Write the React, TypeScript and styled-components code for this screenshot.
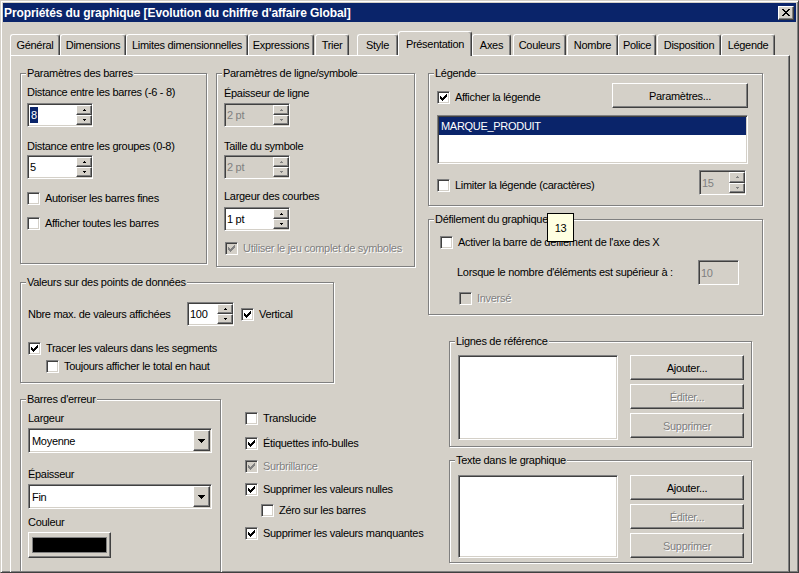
import React from 'react';
import styled, { createGlobalStyle, css } from 'styled-components';

const FACE = '#d4d0c8';
const SHADOW = '#808080';
const DARK = '#404040';
const NAVY = '#0a246a';

const GlobalStyle = createGlobalStyle`
  html, body {
    margin: 0;
    padding: 0;
    background: ${FACE};
  }
  body {
    font-family: 'Liberation Sans', Arial, sans-serif;
    font-size: 11px;
    letter-spacing: -0.3px;
    color: #000;
  }
  * {
    box-sizing: border-box;
  }
`;

const raised = css`
  border: 1px solid;
  border-color: #fff ${DARK} ${DARK} #fff;
  box-shadow: inset -1px -1px ${SHADOW}, inset 1px 1px ${FACE};
  background: ${FACE};
`;

const sunken = css`
  border: 1px solid;
  border-color: ${SHADOW} #fff #fff ${SHADOW};
  box-shadow: inset 1px 1px ${DARK}, inset -1px -1px ${FACE};
`;

const disabledText = css`
  color: ${SHADOW};
  text-shadow: 1px 1px 0 #fff;
`;

// Dialog frame
const Window = styled.div`
  width: 799px;
  height: 573px;
  overflow: hidden;
  background: ${FACE};
  border: 1px solid;
  border-color: ${FACE} ${DARK} ${DARK} ${FACE};
  box-shadow: inset 1px 1px #fff, inset -1px -1px ${SHADOW};
  padding: 2px;
  display: flex;
  flex-direction: column;
`;

const TitleBar = styled.div`
  height: 19px;
  flex: none;
  background: ${NAVY};
  display: flex;
  align-items: center;
  justify-content: space-between;
  padding: 0 2px 0 1px;
`;

const TitleText = styled.div`
  color: #fff;
  font-weight: bold;
  font-size: 12px;
  letter-spacing: -0.1px;
  white-space: nowrap;
`;

const CloseButton = styled.div`
  ${raised};
  width: 16px;
  height: 14px;
  display: flex;
  align-items: center;
  justify-content: center;
`;

// Tabs
const TabRow = styled.div`
  display: flex;
  align-items: flex-end;
  height: 24px;
  margin-top: 9px;
  padding-left: 7px;
  flex: none;
`;

const Tab = styled.div<{ $w: number; $gap: number; $active?: boolean }>`
  width: ${(p) => p.$w}px;
  margin-left: ${(p) => p.$gap}px;
  height: ${(p) => (p.$active ? 25 : 21)}px;
  margin-bottom: ${(p) => (p.$active ? -1 : 0)}px;
  position: ${(p) => (p.$active ? 'relative' : 'static')};
  z-index: ${(p) => (p.$active ? 2 : 'auto')};
  background: ${FACE};
  border-top: 1px solid #fff;
  border-left: 1px solid #fff;
  border-right: 1px solid ${DARK};
  box-shadow: inset -1px 0 ${SHADOW};
  border-radius: 3px 3px 0 0;
  display: flex;
  align-items: center;
  justify-content: center;
  padding-bottom: ${(p) => (p.$active ? 1 : 0)}px;
  white-space: nowrap;
  flex: none;
`;

const Panel = styled.div`
  margin-left: 7px;
  width: 780px;
  flex: 1;
  border-top: 1px solid #fff;
  border-left: 1px solid #fff;
  border-right: 1px solid ${DARK};
  box-shadow: inset -1px 0 ${SHADOW};
  padding: 17px 0 0 9px;
  display: flex;
  gap: 13px;
  align-items: flex-start;
`;

const Column = styled.div<{ $w: number }>`
  width: ${(p) => p.$w}px;
  display: flex;
  flex-direction: column;
  align-items: flex-start;
  flex: none;
`;

const GroupRow = styled.div<{ $mt?: number }>`
  display: flex;
  align-items: flex-start;
  gap: 9px;
  margin-top: ${(p) => p.$mt ?? 0}px;
`;

// Etched group box
const Group = styled.div<{ $w: number; $h: number; $pad: string; $mt?: number; $ml?: number }>`
  position: relative;
  width: ${(p) => p.$w}px;
  height: ${(p) => p.$h}px;
  margin-top: ${(p) => p.$mt ?? 0}px;
  margin-left: ${(p) => p.$ml ?? 0}px;
  padding: ${(p) => p.$pad};
  border: 1px solid ${SHADOW};
  box-shadow: inset 1px 1px #fff, 1px 1px #fff;
  display: flex;
  flex-direction: column;
  align-items: flex-start;
  flex: none;
`;

const GroupTitle = styled.span`
  position: absolute;
  top: -7px;
  left: 5px;
  padding: 0 1px;
  line-height: 13px;
  background: ${FACE};
  white-space: nowrap;
`;

const Label = styled.div<{ $mt?: number; $w?: number; $disabled?: boolean }>`
  line-height: 13px;
  height: 13px;
  margin-top: ${(p) => p.$mt ?? 0}px;
  white-space: nowrap;
  ${(p) => (p.$w ? `width: ${p.$w}px; flex: none;` : '')}
  ${(p) => (p.$disabled ? disabledText : '')}
`;

const Row = styled.div<{ $mt?: number; $ml?: number; $align?: string; $justify?: string }>`
  display: flex;
  align-items: ${(p) => p.$align ?? 'center'};
  justify-content: ${(p) => p.$justify ?? 'flex-start'};
  margin-top: ${(p) => p.$mt ?? 0}px;
  margin-left: ${(p) => p.$ml ?? 0}px;
  align-self: stretch;
`;

// Spin edit
const SpinField = styled.div<{ $w: number; $h?: number; $disabled?: boolean; $mt?: number; $mr?: number }>`
  ${sunken};
  width: ${(p) => p.$w}px;
  height: ${(p) => p.$h ?? 24}px;
  margin-top: ${(p) => p.$mt ?? 0}px;
  margin-right: ${(p) => p.$mr ?? 0}px;
  background: ${(p) => (p.$disabled ? FACE : '#fff')};
  padding: 1px;
  display: flex;
  align-items: stretch;
  flex: none;
`;

const SpinValue = styled.div<{ $disabled?: boolean }>`
  flex: 1;
  display: flex;
  align-items: center;
  padding-left: 1px;
  ${(p) => (p.$disabled ? `color: ${SHADOW};` : '')}
`;

const Selection = styled.span`
  background: ${NAVY};
  color: #fff;
  line-height: 16px;
  padding: 0 1px;
`;

const SpinButtons = styled.div`
  width: 16px;
  margin-right: -1px;
  display: flex;
  flex-direction: column;
`;

const SpinButton = styled.div`
  ${raised};
  flex: 1;
  display: flex;
  align-items: center;
  justify-content: center;
`;

// Combo box
const Combo = styled.div<{ $w: number; $mt?: number }>`
  ${sunken};
  width: ${(p) => p.$w}px;
  height: 25px;
  margin-top: ${(p) => p.$mt ?? 0}px;
  background: #fff;
  padding: 1px;
  display: flex;
  align-items: stretch;
  flex: none;
`;

const ComboValue = styled.div`
  flex: 1;
  display: flex;
  align-items: center;
  padding-left: 2px;
`;

const ComboButton = styled.div`
  ${raised};
  width: 17px;
  display: flex;
  align-items: center;
  justify-content: center;
`;

// Check box
const CheckRow = styled.div<{ $mt?: number; $ml?: number }>`
  display: flex;
  align-items: center;
  gap: 5px;
  margin-top: ${(p) => p.$mt ?? 0}px;
  margin-left: ${(p) => p.$ml ?? 0}px;
  line-height: 13px;
  white-space: nowrap;
  flex: none;
`;

const Box = styled.span<{ $disabled?: boolean }>`
  ${sunken};
  width: 13px;
  height: 13px;
  background: ${(p) => (p.$disabled ? FACE : '#fff')};
  display: flex;
  align-items: center;
  justify-content: center;
  flex: none;
`;

const CheckText = styled.span<{ $disabled?: boolean }>`
  ${(p) => (p.$disabled ? disabledText : '')}
`;

// Push button
const Button = styled.div<{ $w: number; $h?: number; $disabled?: boolean }>`
  ${raised};
  width: ${(p) => p.$w}px;
  height: ${(p) => p.$h ?? 25}px;
  display: flex;
  align-items: center;
  justify-content: center;
  white-space: nowrap;
  flex: none;
  ${(p) => (p.$disabled ? disabledText : '')}
`;

const ButtonStack = styled.div`
  display: flex;
  flex-direction: column;
  gap: 4px;
  margin-left: 12px;
`;

const ColorButton = styled.div<{ $mt?: number }>`
  ${raised};
  width: 83px;
  height: 26px;
  margin-top: ${(p) => p.$mt ?? 0}px;
  padding: 4px 3px;
  display: flex;
  flex: none;
`;

const Swatch = styled.div<{ $color: string }>`
  flex: 1;
  background: ${(p) => p.$color};
  border: 1px solid ${SHADOW};
`;

// List box
const ListBox = styled.div<{ $w: number; $h: number; $mt?: number }>`
  ${sunken};
  width: ${(p) => p.$w}px;
  height: ${(p) => p.$h}px;
  margin-top: ${(p) => p.$mt ?? 0}px;
  background: #fff;
  padding: 1px;
  flex: none;
`;

const ListItem = styled.div<{ $selected?: boolean }>`
  height: 18px;
  line-height: 18px;
  padding-left: 2px;
  background: ${(p) => (p.$selected ? NAVY : 'transparent')};
  color: ${(p) => (p.$selected ? '#fff' : '#000')};
`;

const CheckColumn = styled.div`
  display: flex;
  flex-direction: column;
  align-items: flex-start;
  padding-top: 13px;
  margin-left: 15px;
`;

const Tooltip = styled.div`
  position: absolute;
  left: 118px;
  top: -7px;
  width: 27px;
  height: 29px;
  background: #ffffe1;
  border: 1px solid #000;
  display: flex;
  align-items: center;
  justify-content: center;
  z-index: 3;
`;

// Little drawings
const checkColumns = [2, 3, 4, 3, 2, 1, 0];

const CheckMark = ({ color }: { color: string }) => (
  <svg width="7" height="7" viewBox="0 0 7 7" shapeRendering="crispEdges">
    {checkColumns.map((y, x) => (
      <rect key={x} x={x} y={y} width="1" height="3" fill={color} />
    ))}
  </svg>
);

const SmallArrow = ({ down, color }: { down?: boolean; color: string }) => (
  <svg width="3" height="2" viewBox="0 0 3 2" shapeRendering="crispEdges">
    {down ? (
      <>
        <rect x="0" y="0" width="3" height="1" fill={color} />
        <rect x="1" y="1" width="1" height="1" fill={color} />
      </>
    ) : (
      <>
        <rect x="1" y="0" width="1" height="1" fill={color} />
        <rect x="0" y="1" width="3" height="1" fill={color} />
      </>
    )}
  </svg>
);

const DropArrow = () => (
  <svg width="7" height="4" viewBox="0 0 7 4" shapeRendering="crispEdges">
    <rect x="0" y="0" width="7" height="1" fill="#000" />
    <rect x="1" y="1" width="5" height="1" fill="#000" />
    <rect x="2" y="2" width="3" height="1" fill="#000" />
    <rect x="3" y="3" width="1" height="1" fill="#000" />
  </svg>
);

const closeRows: [number, number][][] = [
  [[0, 2], [6, 2]],
  [[1, 2], [5, 2]],
  [[2, 4]],
  [[3, 2]],
  [[2, 4]],
  [[1, 2], [5, 2]],
  [[0, 2], [6, 2]],
];

const CloseGlyph = () => (
  <svg width="8" height="7" viewBox="0 0 8 7" shapeRendering="crispEdges">
    {closeRows.map((row, y) =>
      row.map(([x, w]) => <rect key={`${y}-${x}`} x={x} y={y} width={w} height="1" fill="#000" />)
    )}
  </svg>
);

// Controls
interface CheckProps {
  label: string;
  checked?: boolean;
  disabled?: boolean;
  mt?: number;
  ml?: number;
}

const Check: React.FC<CheckProps> = ({ label, checked, disabled, mt, ml }) => (
  <CheckRow $mt={mt} $ml={ml}>
    <Box $disabled={disabled}>{checked && <CheckMark color={disabled ? SHADOW : '#000'} />}</Box>
    <CheckText $disabled={disabled}>{label}</CheckText>
  </CheckRow>
);

interface SpinProps {
  value: React.ReactNode;
  w: number;
  h?: number;
  disabled?: boolean;
  mt?: number;
  mr?: number;
}

const Spin: React.FC<SpinProps> = ({ value, w, h, disabled, mt, mr }) => {
  const arrow = disabled ? SHADOW : '#000';
  return (
    <SpinField $w={w} $h={h} $disabled={disabled} $mt={mt} $mr={mr}>
      <SpinValue $disabled={disabled}>{value}</SpinValue>
      <SpinButtons>
        <SpinButton>
          <SmallArrow color={arrow} />
        </SpinButton>
        <SpinButton>
          <SmallArrow down color={arrow} />
        </SpinButton>
      </SpinButtons>
    </SpinField>
  );
};

const tabs = [
  { label: 'Général', l: 10, r: 59 },
  { label: 'Dimensions', l: 60, r: 125 },
  { label: 'Limites dimensionnelles', l: 126, r: 247 },
  { label: 'Expressions', l: 248, r: 313 },
  { label: 'Trier', l: 315, r: 348 },
  { label: 'Style', l: 357, r: 397 },
  { label: 'Présentation', l: 398, r: 471, active: true },
  { label: 'Axes', l: 472, r: 510 },
  { label: 'Couleurs', l: 513, r: 565 },
  { label: 'Nombre', l: 567, r: 617 },
  { label: 'Police', l: 618, r: 655 },
  { label: 'Disposition', l: 657, r: 720 },
  { label: 'Légende', l: 721, r: 774 },
];

export default function App() {
  return (
    <>
      <GlobalStyle />
      <Window>
        <TitleBar>
          <TitleText>Propriétés du graphique [Evolution du chiffre d'affaire Global]</TitleText>
          <CloseButton>
            <CloseGlyph />
          </CloseButton>
        </TitleBar>

        <TabRow>
          {tabs.map((t, i) => (
            <Tab
              key={t.label}
              $w={t.r - t.l + 1}
              $gap={i === 0 ? 0 : t.l - tabs[i - 1].r - 1}
              $active={t.active}
            >
              {t.label}
            </Tab>
          ))}
        </TabRow>

        <Panel>
          <Column $w={395}>
            <GroupRow>
              <Group $w={187} $h={191} $pad="12px 6px 0">
                <GroupTitle>Paramètres des barres</GroupTitle>
                <Label>Distance entre les barres (-6 - 8)</Label>
                <Spin w={66} mt={4} value={<Selection>8</Selection>} />
                <Label $mt={13}>Distance entre les groupes (0-8)</Label>
                <Spin w={66} mt={2} value="5" />
                <Check mt={13} label="Autoriser les barres fines" />
                <Check mt={12} label="Afficher toutes les barres" />
              </Group>

              <Group $w={199} $h={194} $pad="13px 7px 0">
                <GroupTitle>Paramètres de ligne/symbole</GroupTitle>
                <Label>Épaisseur de ligne</Label>
                <Spin w={66} mt={3} value="2 pt" disabled />
                <Label $mt={13}>Taille du symbole</Label>
                <Spin w={66} mt={2} value="2 pt" disabled />
                <Label $mt={11}>Largeur des courbes</Label>
                <Spin w={66} mt={4} value="1 pt" />
                <Check mt={11} ml={1} label="Utiliser le jeu complet de symboles" checked disabled />
              </Group>
            </GroupRow>

            <Group $w={314} $h={101} $pad="19px 7px 0" $mt={15}>
              <GroupTitle>Valeurs sur des points de données</GroupTitle>
              <Row>
                <Label $w={159}>Nbre max. de valeurs affichées</Label>
                <Spin w={47} value="100" />
                <Check ml={7} label="Vertical" checked />
              </Row>
              <Check mt={16} label="Tracer les valeurs dans les segments" checked />
              <Check mt={5} ml={18} label="Toujours afficher le total en haut" />
            </Group>

            <GroupRow $mt={16}>
              <Group $w={201} $h={173} $pad="12px 7px 0">
                <GroupTitle>Barres d'erreur</GroupTitle>
                <Label>Largeur</Label>
                <Combo $w={184} $mt={3}>
                  <ComboValue>Moyenne</ComboValue>
                  <ComboButton>
                    <DropArrow />
                  </ComboButton>
                </Combo>
                <Label $mt={15}>Épaisseur</Label>
                <Combo $w={184} $mt={3}>
                  <ComboValue>Fin</ComboValue>
                  <ComboButton>
                    <DropArrow />
                  </ComboButton>
                </Combo>
                <Label $mt={7}>Couleur</Label>
                <ColorButton $mt={3}>
                  <Swatch $color="#000" />
                </ColorButton>
              </Group>

              <CheckColumn>
                <Check label="Translucide" />
                <Check mt={12} label="Étiquettes info-bulles" checked />
                <Check mt={10} label="Surbrillance" checked disabled />
                <Check mt={10} label="Supprimer les valeurs nulles" checked />
                <Check mt={8} ml={16} label="Zéro sur les barres" />
                <Check mt={10} label="Supprimer les valeurs manquantes" checked />
              </CheckColumn>
            </GroupRow>
          </Column>

          <Column $w={340}>
            <Group $w={335} $h={133} $pad="9px 14px 0 8px">
              <GroupTitle>Légende</GroupTitle>
              <Row $align="flex-start" $justify="space-between">
                <Check mt={8} label="Afficher la légende" checked />
                <Button $w={136}>Paramètres...</Button>
              </Row>
              <ListBox $w={311} $h={49} $mt={7}>
                <ListItem $selected>MARQUE_PRODUIT</ListItem>
              </ListBox>
              <Row $mt={6} $align="flex-start" $justify="space-between">
                <Check mt={9} label="Limiter la légende (caractères)" />
                <Spin w={47} h={25} mr={2} value="15" disabled />
              </Row>
            </Group>

            <Group $w={335} $h={96} $pad="16px 0 0 11px" $mt={13}>
              <GroupTitle>Défilement du graphique</GroupTitle>
              <Tooltip>13</Tooltip>
              <Check label="Activer la barre de défilement de l'axe des X" />
              <Row $mt={11} $ml={17}>
                <Label $w={241}>Lorsque le nombre d'éléments est supérieur à :</Label>
                <SpinField $w={41} $h={25} $disabled>
                  <SpinValue $disabled>10</SpinValue>
                </SpinField>
              </Row>
              <Check mt={7} ml={19} label="Inversé" disabled />
            </Group>

            <Group $w={303} $h={106} $pad="13px 0 0 8px" $mt={26} $ml={21}>
              <GroupTitle>Lignes de référence</GroupTitle>
              <Row $align="flex-start">
                <ListBox $w={160} $h={85} />
                <ButtonStack>
                  <Button $w={114}>Ajouter...</Button>
                  <Button $w={114} $disabled>
                    Éditer...
                  </Button>
                  <Button $w={114} $disabled>
                    Supprimer
                  </Button>
                </ButtonStack>
              </Row>
            </Group>

            <Group $w={303} $h={103} $pad="14px 0 0 8px" $mt={13} $ml={21}>
              <GroupTitle>Texte dans le graphique</GroupTitle>
              <Row $align="flex-start">
                <ListBox $w={160} $h={83} />
                <ButtonStack>
                  <Button $w={114}>Ajouter...</Button>
                  <Button $w={114} $disabled>
                    Éditer...
                  </Button>
                  <Button $w={114} $disabled>
                    Supprimer
                  </Button>
                </ButtonStack>
              </Row>
            </Group>
          </Column>
        </Panel>
      </Window>
    </>
  );
}
